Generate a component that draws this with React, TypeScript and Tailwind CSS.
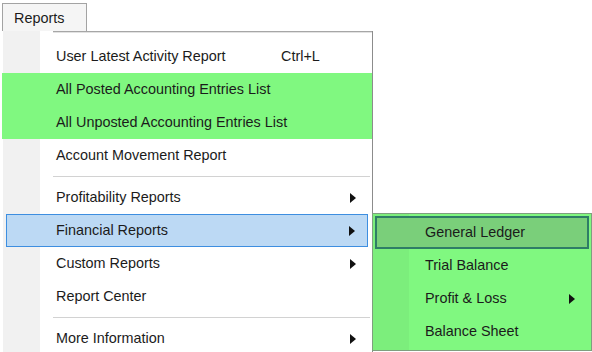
import React from 'react';

type Item =
  | { kind: 'item'; label: string; shortcut?: string; sub?: boolean; tone?: 'green' | 'active' }
  | { kind: 'sep' };

const items: Item[] = [
  { kind: 'item', label: 'User Latest Activity Report', shortcut: 'Ctrl+L' },
  { kind: 'item', label: 'All Posted Accounting Entries List', tone: 'green' },
  { kind: 'item', label: 'All Unposted Accounting Entries List', tone: 'green' },
  { kind: 'item', label: 'Account Movement Report' },
  { kind: 'sep' },
  { kind: 'item', label: 'Profitability Reports', sub: true },
  { kind: 'item', label: 'Financial Reports', sub: true, tone: 'active' },
  { kind: 'item', label: 'Custom Reports', sub: true },
  { kind: 'item', label: 'Report Center' },
  { kind: 'sep' },
  { kind: 'item', label: 'More Information', sub: true },
];

const subItems = [
  { label: 'General Ledger', active: true },
  { label: 'Trial Balance' },
  { label: 'Profit & Loss', sub: true },
  { label: 'Balance Sheet' },
];

const Arrow = () => (
  <svg width="6" height="10" viewBox="0 0 6 10" className="shrink-0">
    <polygon points="0,0 6,5 0,10" fill="#111" />
  </svg>
);

const MenuRow = ({ item }: { item: Extract<Item, { kind: 'item' }> }) => {
  if (item.tone === 'active') {
    return (
      <div className="h-[33px] flex items-center">
        <div className="mx-[4px] h-[33px] flex-1 flex items-center border border-[#3d8ee0] bg-[#bcd9f4] pl-[49px] pr-[12px]">
          <span className="flex-1 whitespace-nowrap">{item.label}</span>
          {item.sub && <Arrow />}
        </div>
      </div>
    );
  }
  return (
    <div
      className={
        'h-[33px] flex items-center pl-[54px] pr-[16px] whitespace-nowrap ' +
        (item.tone === 'green' ? 'bg-[#80f880]' : '')
      }
    >
      <span className="min-w-[225px]">{item.label}</span>
      <span className="flex-1">{item.shortcut}</span>
      {item.sub && <Arrow />}
    </div>
  );
};

export default function App() {
  return (
    <div
      className="relative w-[592px] h-[352px] overflow-hidden bg-white text-[14.4px] text-[#1b1b1b]"
      style={{ fontFamily: '"Liberation Sans", Arial, sans-serif' }}
    >
      {/* menu bar tab */}
      <div className="pt-[3px] pl-[2px]">
        <div className="w-[85px] h-[28px] border-t border-l border-r border-[#a3a3a3] bg-[#f5f5f5] pl-[11px] pt-[4px]">
          Reports
        </div>
      </div>

      {/* drop-down menu */}
      <div className="ml-[2px] w-[371px] border-r border-[#8c8c8c] bg-[linear-gradient(to_right,#ffffff_1px,#f1f1f1_1px,#f1f1f1_38px,#ffffff_38px)]">
        <div className="ml-[51px] h-px bg-[#a6a6a6]" />
        <div className="ml-[51px] h-px bg-[#e2e2e2]" />
        <div className="h-[7px]" />
        {items.map((it, i) =>
          it.kind === 'sep' ? (
            <div key={i} className="h-[9px] flex items-center">
              <div className="ml-[51px] mr-[2px] flex-1 h-px bg-[#d2d2d2]" />
            </div>
          ) : (
            <MenuRow key={i} item={it} />
          )
        )}
      </div>

      {/* financial reports submenu */}
      <div className="absolute left-[372px] top-[213px] w-[220px] border border-[#7f9f7f] bg-[linear-gradient(to_right,#7cee7c_36px,#80f880_36px)] pt-[2px] pb-[2px]">
        {subItems.map((s) =>
          s.active ? (
            <div key={s.label} className="h-[33px] mx-[2px] flex items-center border-2 border-[#2f7d66] bg-[#7acf7a] pl-[48px] whitespace-nowrap">
              {s.label}
            </div>
          ) : (
            <div key={s.label} className="h-[33px] flex items-center pl-[52px] pr-[16px] whitespace-nowrap">
              <span className="flex-1">{s.label}</span>
              {s.sub && <Arrow />}
            </div>
          )
        )}
      </div>
    </div>
  );
}
